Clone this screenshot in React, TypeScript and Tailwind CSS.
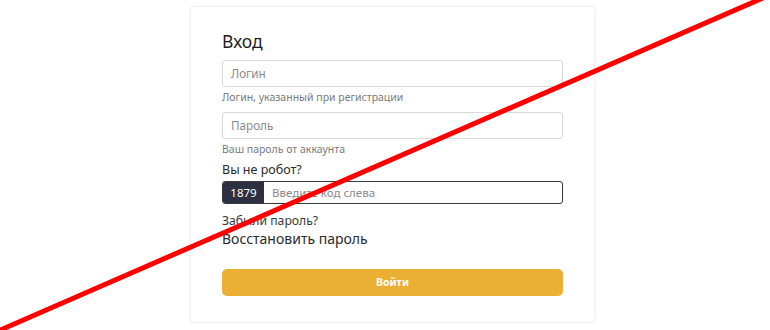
import { FC } from "react";

const font = { fontFamily: '"Noto Sans", "DejaVu Sans", sans-serif' };

const Field: FC<{ placeholder: string; hint: string }> = ({ placeholder, hint }) => (
	<div className="flex flex-col">
		<div className="h-[27px] w-[341px] rounded-[3px] border border-[#d9d9d9] bg-white flex items-center pl-[8px]">
			<span className="text-[11.7px] text-[#8a8a8a]">{placeholder}</span>
		</div>
		<p className="mt-[4px] text-[10.5px] leading-[12px] text-[#7a7a7a]">{hint}</p>
	</div>
);

export const App: FC = () => {
	return (
		<div className="relative w-[770px] h-[330px] overflow-hidden bg-white" style={font}>
			<div className="ml-[190px] mt-[6px] w-[405px] h-[317px] rounded-[4px] border border-[#efefef] bg-white shadow-[0_0_4px_rgba(0,0,0,0.04)] pl-[31px] pt-[24px]">
				<h1 className="text-[17.5px] leading-[20px] text-[#1f1f1f]">Вход</h1>

				<div className="mt-[9px]">
					<Field placeholder="Логин" hint="Логин, указанный при регистрации" />
				</div>
				<div className="mt-[9px]">
					<Field placeholder="Пароль" hint="Ваш пароль от аккаунта" />
				</div>

				<p className="mt-[7px] text-[12.5px] leading-[16px] text-[#2a2a2a]">Вы не робот?</p>
				<div className="mt-[3px] flex h-[23px] w-[341px] rounded-[3px] border border-[#3a3a3a] overflow-hidden">
					<div className="w-[41px] bg-[#2c3041] flex items-center justify-center text-[11.5px] text-white">1879</div>
					<div className="flex-1 flex items-center pl-[8px] text-[11.5px] text-[#8a8a8a]">Введите код слева</div>
				</div>

				<p className="mt-[10px] text-[12.2px] leading-[14px] text-[#3a3a3a]">Забыли пароль?</p>
				<p className="mt-[3px] text-[14px] leading-[16px] text-[#2a2a2a]">Восстановить пароль</p>

				<button className="mt-[22px] h-[27px] w-[341px] rounded-[5px] bg-[#ebaf33] text-[10.5px] font-bold text-white">
					Войти
				</button>
			</div>

			<svg className="absolute inset-0 pointer-events-none" width="770" height="330" viewBox="0 0 770 330">
				<line x1="-2" y1="331" x2="772" y2="-6" stroke="#ff0000" strokeWidth="5" />
			</svg>
		</div>
	);
};

export default App;
